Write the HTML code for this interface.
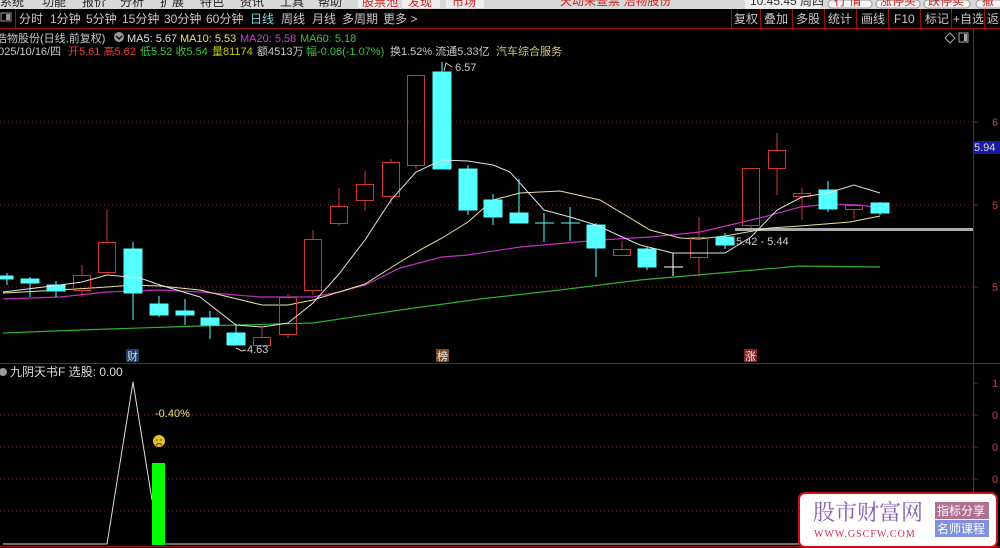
<!DOCTYPE html>
<html><head><meta charset="utf-8"><style>
html,body{margin:0;padding:0;background:#000;width:1000px;height:548px;overflow:hidden;font-family:"Liberation Sans","Noto Sans CJK SC",sans-serif}
svg{display:block}
</style></head><body>
<svg width="1000" height="548" xmlns="http://www.w3.org/2000/svg" font-family="Liberation Sans, Noto Sans CJK SC, sans-serif">
<rect width="1000" height="548" fill="#000"/>
<rect x="0" y="0" width="1000" height="9" fill="#d8d8d8"/>
<g font-size="12" fill="#222">
<text x="0" y="6">系统</text><text x="42" y="6">功能</text><text x="82" y="6">报价</text><text x="120" y="6">分析</text><text x="160" y="6">扩展</text><text x="200" y="6">特色</text><text x="240" y="6">资讯</text><text x="280" y="6">工具</text><text x="318" y="6">帮助</text>
</g>
<rect x="358" y="0" width="38" height="8" fill="#eee"/><text x="362" y="6" font-size="12" fill="#d02020">股票池</text>
<rect x="402" y="0" width="38" height="8" fill="#eee"/><text x="408" y="6" font-size="12" fill="#d02020">发现</text>
<rect x="446" y="0" width="38" height="8" fill="#eee"/><text x="452" y="6" font-size="12" fill="#d02020">市场</text>
<text x="560" y="5" font-size="12" fill="#d02020">天动来查票 浩物股份</text>
<rect x="745" y="0" width="75" height="9" fill="#eee"/><text x="750" y="5" font-size="12" fill="#333">10:45:45 周四</text>
<rect x="828" y="0" width="44" height="8" rx="4" fill="#f4f4f4" stroke="#999"/><text x="834" y="5" font-size="12" fill="#d02020">行 情</text>
<rect x="876" y="0" width="44" height="8" rx="4" fill="#f4f4f4" stroke="#999"/><text x="880" y="5" font-size="12" fill="#d02020">涨停买</text>
<rect x="924" y="0" width="46" height="8" rx="4" fill="#f4f4f4" stroke="#999"/><text x="928" y="5" font-size="12" fill="#d02020">跌停卖</text>
<rect x="976" y="0" width="30" height="8" rx="4" fill="#f4f4f4" stroke="#999"/><text x="982" y="5" font-size="12" fill="#d02020">撤</text>
<line x1="0" y1="28.5" x2="1000" y2="28.5" stroke="#a01010"/>
<rect x="1" y="13" width="10" height="8" fill="none" stroke="#999"/><rect x="6" y="14" width="4" height="6" fill="#999"/>
<line x1="15.5" y1="9" x2="15.5" y2="28" stroke="#a01010"/>
<g font-size="12" fill="#c8c8c8">
<text x="19" y="23">分时</text><text x="50" y="23">1分钟</text><text x="86" y="23">5分钟</text><text x="122" y="23">15分钟</text><text x="164" y="23">30分钟</text><text x="206" y="23">60分钟</text><text x="250" y="23" fill="#7fd8d8">日线</text><text x="281" y="23">周线</text><text x="312" y="23">月线</text><text x="342" y="23">多周期</text><text x="383" y="23">更多 &gt;</text>
</g>
<g stroke="#a01010"><line x1="731.5" y1="9" x2="731.5" y2="28"/><line x1="760.5" y1="9" x2="760.5" y2="28"/><line x1="792.5" y1="9" x2="792.5" y2="28"/><line x1="824.5" y1="9" x2="824.5" y2="28"/><line x1="856.5" y1="9" x2="856.5" y2="28"/><line x1="888.5" y1="9" x2="888.5" y2="28"/><line x1="920.5" y1="9" x2="920.5" y2="28"/><line x1="951.5" y1="9" x2="951.5" y2="28"/><line x1="984.5" y1="9" x2="984.5" y2="28"/></g>
<g font-size="12" fill="#c8c8c8"><text x="734" y="23">复权</text><text x="764" y="23">叠加</text><text x="796" y="23">多股</text><text x="828" y="23">统计</text><text x="861" y="23">画线</text><text x="894" y="23">F10</text><text x="925" y="23">标记</text><text x="953" y="23">+自选</text><text x="987" y="23">返</text></g>
<g font-size="11">
<text x="-4" y="42" fill="#c8c8c8">浩物股份(日线,前复权)</text>
<circle cx="119" cy="37" r="5" fill="#999"/><path d="M116 36 L119 39 L122 36" stroke="#000" fill="none" stroke-width="1.3"/>
<text x="127" y="42" fill="#e0e0e0">MA5: 5.67</text><text x="180" y="42" fill="#e8e070">MA10: 5.53</text><text x="240" y="42" fill="#d040d0">MA20: 5.58</text><text x="300" y="42" fill="#40c040">MA60: 5.18</text>
<text x="-8" y="55" fill="#c8c8c8">2025/10/16/四</text>
<text x="68" y="55" fill="#e04040">开5.61 高5.62</text><text x="140" y="55" fill="#40c040">低5.52 收5.54</text><text x="212" y="55" fill="#c8c800">量81174</text><text x="257" y="55" fill="#c8c8c8">额4513万</text><text x="306" y="55" fill="#40c040">幅-0.06(-1.07%)</text><text x="390" y="55" fill="#c8c8c8">换1.52% 流通5.33亿</text><text x="496" y="55" fill="#c8c880">汽车综合服务</text>
</g>
<path d="M945 38 L950 33 L955 38 L950 43 Z" fill="none" stroke="#aaa"/>
<rect x="959" y="33" width="9" height="9" fill="none" stroke="#aaa"/><rect x="964" y="34" width="3" height="7" fill="#aaa"/>
<line x1="973.5" y1="28" x2="973.5" y2="548" stroke="#a01010"/>
<line x1="0" y1="363.5" x2="1000" y2="363.5" stroke="#a01010"/>
<line x1="0" y1="546.5" x2="1000" y2="546.5" stroke="#a01010"/>
<g stroke="#702020" stroke-dasharray="1,3"><line x1="0" y1="122" x2="973" y2="122"/><line x1="0" y1="205" x2="973" y2="205"/><line x1="0" y1="287" x2="973" y2="287"/>
<line x1="0" y1="415" x2="973" y2="415"/><line x1="0" y1="447" x2="973" y2="447"/><line x1="0" y1="479" x2="973" y2="479"/><line x1="0" y1="511" x2="973" y2="511"/></g>
<g stroke="#a01010"><line x1="973" y1="122" x2="978" y2="122"/><line x1="973" y1="205" x2="978" y2="205"/><line x1="973" y1="287" x2="978" y2="287"/><line x1="973" y1="383" x2="978" y2="383"/><line x1="973" y1="415" x2="978" y2="415"/><line x1="973" y1="447" x2="978" y2="447"/><line x1="973" y1="479" x2="978" y2="479"/></g>
<g font-size="11" fill="#c84040"><text x="992" y="126">6</text><text x="992" y="209">5</text><text x="992" y="291">5</text></g>
<g font-size="11" fill="#c84040"><text x="992" y="387">1</text><text x="992" y="419">0</text><text x="992" y="451">0</text><text x="992" y="483">0</text></g>
<rect x="973" y="141" width="27" height="13" fill="#1a1aa0"/><text x="974" y="151" font-size="11" fill="#ddd">5.94</text>
<line x1="735" y1="229.5" x2="973" y2="229.5" stroke="#aaa" stroke-width="3"/>
<polyline fill="none" stroke="#30b030" stroke-width="1.2" points="3,333 80,330 200,326 313,323 400,310 480,299 560,290 640,280 720,273 800,266 880,267"/>
<polyline fill="none" stroke="#c030c0" stroke-width="1.2" points="3,299 60,297 107,292 160,290 200,292 260,297 313,297 339,292 365,285 400,268 442,257 468,255 520,247 600,240 650,237 700,232 760,218 800,207 830,204 860,205 880,208"/>
<polyline fill="none" stroke="#e8e0a0" stroke-width="1" points="3,293 60,290 107,287 133,285 160,286 200,290 262,305 288,305 313,300 339,292 365,284 400,262 420,250 442,238 468,222 493,200 520,193 560,191 600,200 650,230 680,238 699,239 725,236 770,228 800,226 850,222 880,216"/>
<g stroke-width="1">
<g fill="#55ffff" stroke="#55ffff">
<line x1="7" y1="273" x2="7" y2="285"/><rect x="0" y="276" width="13" height="3"/>
<line x1="30" y1="277" x2="30" y2="297"/><rect x="21" y="279" width="18" height="4"/>
<line x1="56" y1="281" x2="56" y2="297"/><rect x="47" y="285" width="18" height="6"/>
<line x1="133" y1="242" x2="133" y2="320"/><rect x="124" y="249" width="18" height="44"/>
<line x1="159" y1="296" x2="159" y2="317"/><rect x="150" y="304" width="18" height="11"/>
<line x1="185" y1="299" x2="185" y2="325"/><rect x="176" y="311" width="18" height="4"/>
<line x1="210" y1="311" x2="210" y2="339"/><rect x="201" y="318" width="18" height="7"/>
<line x1="236" y1="324" x2="236" y2="345"/><rect x="227" y="333" width="18" height="12"/>
<line x1="442" y1="62" x2="442" y2="169"/><rect x="433" y="72" width="18" height="97"/>
<line x1="468" y1="165" x2="468" y2="215"/><rect x="459" y="169" width="18" height="41"/>
<line x1="493" y1="194" x2="493" y2="225"/><rect x="484" y="200" width="18" height="17"/>
<line x1="519" y1="179" x2="519" y2="223"/><rect x="510" y="213" width="18" height="10"/>
<line x1="544" y1="213" x2="544" y2="242"/><line x1="535" y1="223" x2="554" y2="223"/>
<line x1="570" y1="207" x2="570" y2="241"/><line x1="561" y1="223" x2="580" y2="223"/>
<line x1="596" y1="223" x2="596" y2="277"/><rect x="587" y="225" width="18" height="23"/>
<line x1="647" y1="247" x2="647" y2="270"/><rect x="638" y="249" width="18" height="18"/>
<line x1="725" y1="233" x2="725" y2="249"/><rect x="716" y="237" width="18" height="8"/>
<line x1="828" y1="181" x2="828" y2="212"/><rect x="819" y="190" width="18" height="19"/>
<line x1="880" y1="202" x2="880" y2="215"/><rect x="871" y="203" width="18" height="10"/>
</g>
<g stroke="#fff"><line x1="673" y1="253" x2="673" y2="276"/><line x1="664" y1="267" x2="683" y2="267"/></g>
<g fill="none" stroke="#d03838">
<line x1="82" y1="265" x2="82" y2="275"/><line x1="82" y1="290" x2="82" y2="297"/><rect x="73.5" y="275.5" width="17" height="15"/>
<line x1="107" y1="210" x2="107" y2="242"/><line x1="107" y1="272" x2="107" y2="273"/><rect x="98.5" y="242.5" width="17" height="30"/>
<line x1="262" y1="328" x2="262" y2="337"/><rect x="253.5" y="337.5" width="17" height="8"/>
<line x1="288" y1="294" x2="288" y2="297"/><line x1="288" y1="334" x2="288" y2="338"/><rect x="279.5" y="297.5" width="17" height="37"/>
<line x1="313" y1="230" x2="313" y2="239"/><line x1="313" y1="290" x2="313" y2="295"/><rect x="304.5" y="239.5" width="17" height="51"/>
<line x1="339" y1="188" x2="339" y2="206"/><line x1="339" y1="223" x2="339" y2="226"/><rect x="330.5" y="206.5" width="17" height="17"/>
<line x1="365" y1="171" x2="365" y2="184"/><line x1="365" y1="200" x2="365" y2="211"/><rect x="356.5" y="184.5" width="17" height="16"/>
<line x1="391" y1="159" x2="391" y2="162"/><line x1="391" y1="196" x2="391" y2="204"/><rect x="382.5" y="162.5" width="17" height="34"/>
<line x1="416" y1="165" x2="416" y2="169"/><rect x="407.5" y="75.5" width="17" height="90"/>
<line x1="622" y1="241" x2="622" y2="249"/><rect x="613.5" y="249.5" width="17" height="6"/>
<line x1="699" y1="217" x2="699" y2="237"/><line x1="699" y1="257" x2="699" y2="277"/><rect x="690.5" y="237.5" width="17" height="20"/>
<line x1="751" y1="225" x2="751" y2="228"/><rect x="742.5" y="168.5" width="17" height="57"/>
<line x1="777" y1="133" x2="777" y2="150"/><line x1="777" y1="168" x2="777" y2="195"/><rect x="768.5" y="150.5" width="17" height="18"/>
<line x1="802" y1="188" x2="802" y2="193"/><line x1="802" y1="196" x2="802" y2="220"/><rect x="793.5" y="193.5" width="17" height="3"/>
<line x1="854" y1="209" x2="854" y2="219"/><rect x="845.5" y="205.5" width="17" height="4"/>
</g>
</g>
<polyline fill="none" stroke="#e0e0e0" stroke-width="1" points="3,292 60,285 82,282 107,275 140,278 160,285 200,297 236,325 262,327 288,323 313,303 339,274 365,240 391,200 416,172 442,160 468,161 493,165 510,172 544,210 570,217 596,225 640,245 673,253 725,253 751,237 777,210 802,197 828,193 854,185 880,193"/>
<path d="M444 71 L446 63 L452 67" stroke="#ccc" fill="none"/><text x="455" y="71" font-size="11" fill="#ccc">6.57</text>
<path d="M236 348 L242 351 L246 350" stroke="#ccc" fill="none"/><text x="247" y="353" font-size="11" fill="#ccc">4.63</text>
<text x="736" y="245" font-size="11" fill="#ccc">5.42 - 5.44</text>
<rect x="126" y="349" width="13" height="13" fill="#1a3a6a"/><text x="127" y="360" font-size="11" fill="#ddd">财</text>
<rect x="436" y="349" width="13" height="13" fill="#7a4a20"/><text x="437" y="360" font-size="11" fill="#eee">榜</text>
<rect x="744" y="349" width="13" height="13" fill="#8a2020"/><text x="745" y="360" font-size="11" fill="#eee">涨</text>
<circle cx="3" cy="372" r="4" fill="#999"/>
<text x="10" y="376" font-size="12" fill="#ddd">九阴天书F  选股: 0.00</text>
<polyline fill="none" stroke="#ddd" stroke-width="1" points="3,544 107,544 133,382 152,500"/>
<line x1="165" y1="544" x2="973" y2="544" stroke="#ddd"/>
<rect x="152" y="463" width="13" height="82" fill="#00ff00"/>
<text x="155" y="417" font-size="11" fill="#f0e080">-0.40%</text>
<circle cx="159" cy="441" r="6" fill="#e8c020"/>
<circle cx="157" cy="440" r="0.8" fill="#333"/><circle cx="161" cy="440" r="0.8" fill="#333"/>
<path d="M156 445 Q159 442 162 445" stroke="#333" fill="none"/>
<rect x="799" y="493" width="198" height="54" rx="6" fill="#fff" stroke="#d01010" stroke-width="2"/>
<text x="813" y="520" font-size="22" fill="#8060b0" font-family="Liberation Serif, Noto Serif CJK SC, serif">股市财富网</text>
<text x="814" y="537" font-size="10" fill="#d03050" font-family="Liberation Serif, serif" letter-spacing="1">WWW.GSCFW.COM</text>
<rect x="935" y="502" width="54" height="17" fill="#b07090"/><text x="937" y="515" font-size="12" fill="#fff">指标分享</text>
<rect x="935" y="520" width="54" height="17" fill="#8090e0"/><text x="937" y="533" font-size="12" fill="#fff">名师课程</text>
</svg>
</body></html>
